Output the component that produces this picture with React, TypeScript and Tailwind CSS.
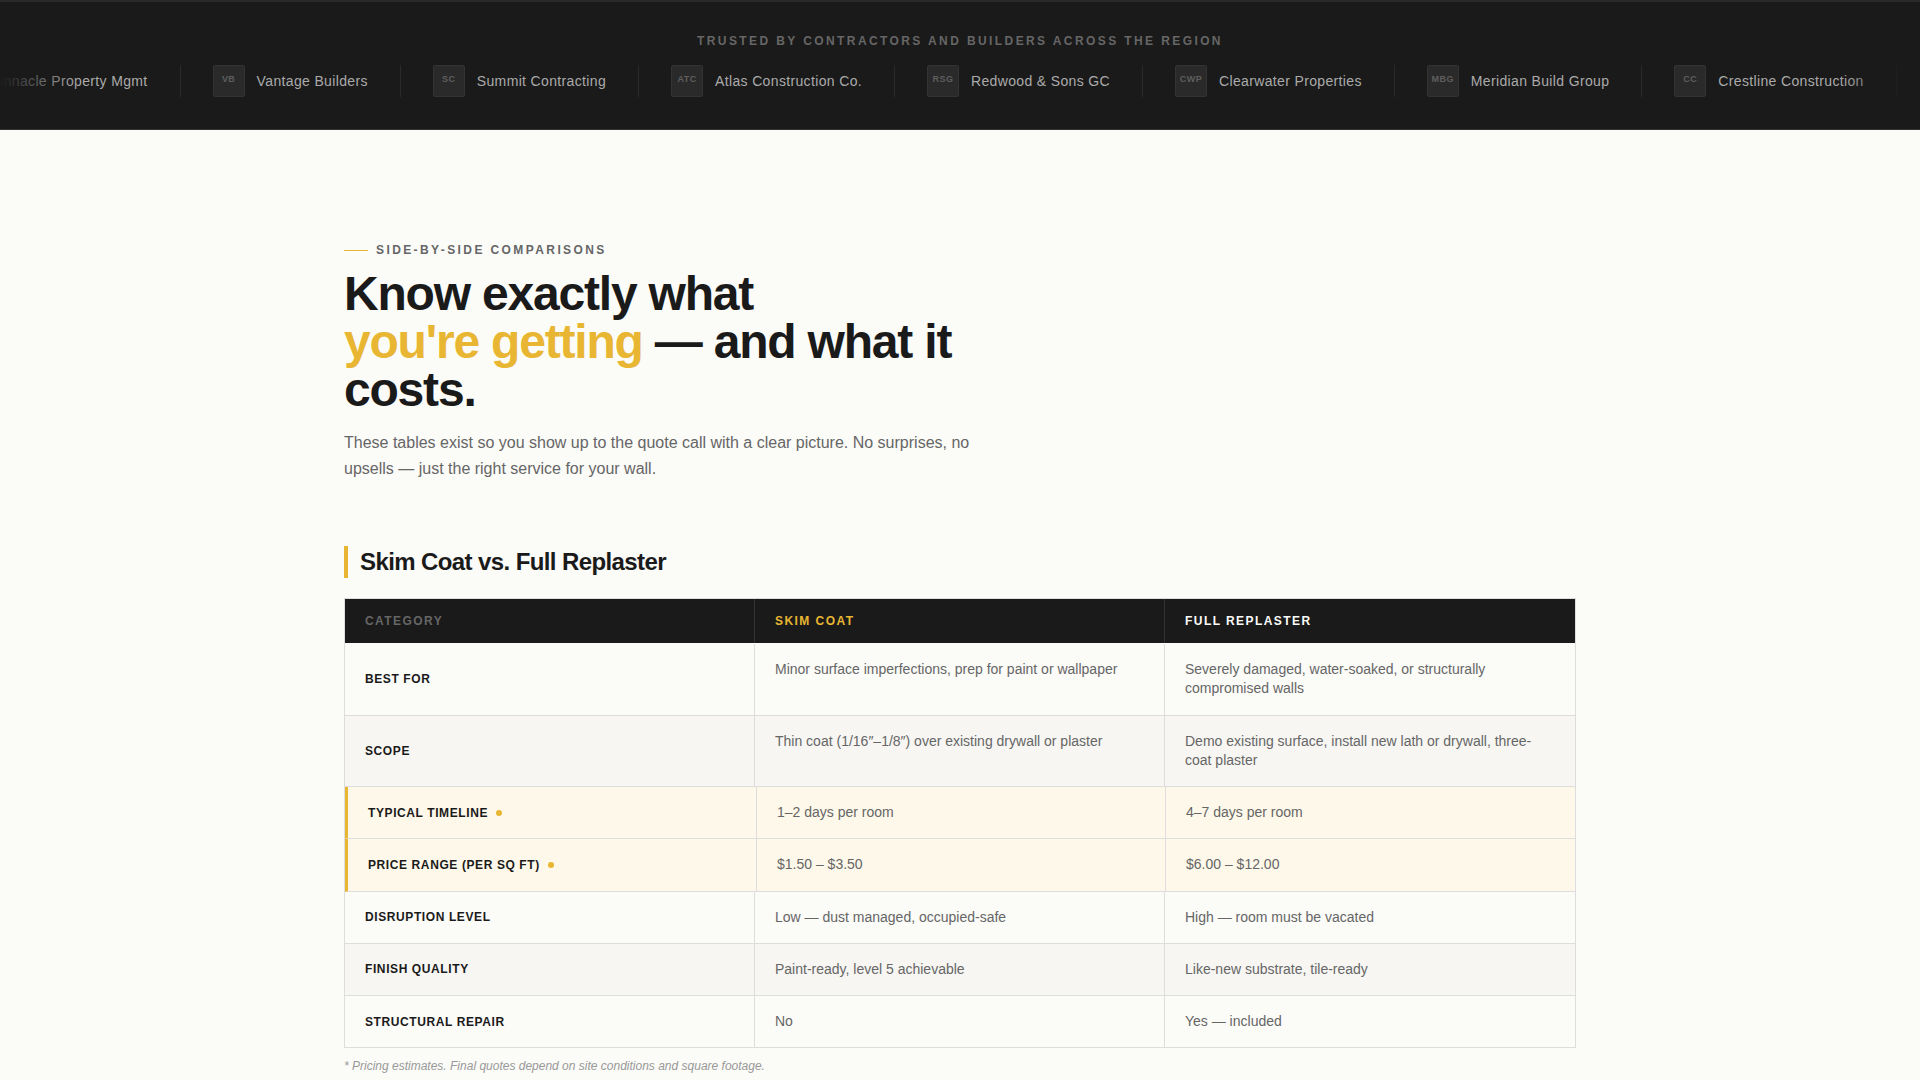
const logos: [string, string][] = [
  ["PP", "Pinnacle Property Mgmt"],
  ["VB", "Vantage Builders"],
  ["SC", "Summit Contracting"],
  ["ATC", "Atlas Construction Co."],
  ["RSG", "Redwood & Sons GC"],
  ["CWP", "Clearwater Properties"],
  ["MBG", "Meridian Build Group"],
  ["CC", "Crestline Construction"],
  ["PP", "Pinnacle Property Mgmt"],
];

type Row = { label: string; a: string; b: string; hl?: boolean; alt?: boolean };
const rows: Row[] = [
  { label: "Best For", a: "Minor surface imperfections, prep for paint or wallpaper", b: "Severely damaged, water-soaked, or structurally compromised walls" },
  { label: "Scope", a: "Thin coat (1/16\u2033\u20131/8\u2033) over existing drywall or plaster", b: "Demo existing surface, install new lath or drywall, three-coat plaster", alt: true },
  { label: "Typical Timeline", a: "1\u20132 days per room", b: "4\u20137 days per room", hl: true },
  { label: "Price Range (per sq ft)", a: "$1.50 \u2013 $3.50", b: "$6.00 \u2013 $12.00", hl: true },
  { label: "Disruption Level", a: "Low \u2014 dust managed, occupied-safe", b: "High \u2014 room must be vacated" },
  { label: "Finish Quality", a: "Paint-ready, level 5 achievable", b: "Like-new substrate, tile-ready", alt: true },
  { label: "Structural Repair", a: "No", b: "Yes \u2014 included" },
];

export default function App() {
  return (
    <div className="min-h-screen bg-[#fbfbf8] font-['Liberation_Sans',Arial,sans-serif] text-[#1a1a1a]">
      <header className="h-[130px] bg-[#1a1a1a] border-t-2 border-b border-t-[#2a2a2a] border-b-[#333] pt-[31px]">
        <p className="text-center text-[12px] leading-[16px] font-bold tracking-[0.2em] uppercase text-[#666]">
          Trusted by contractors and builders across the region
        </p>
        <div className="relative mt-[16px] overflow-hidden">
          <div className="flex w-max ml-[-85.5px]">
            {logos.map(([abbr, name], i) => (
              <div key={i} className="flex items-center gap-3 px-8 border-r border-[#2a2a2a] h-8 shrink-0">
                <div className="w-8 h-8 shrink-0 flex items-center justify-center bg-[#2a2a2a] border border-[#333] rounded-[2px]">
                  <span className="text-[9px] font-bold tracking-[0.05em] text-[#5e5e5e] -translate-y-px">{abbr}</span>
                </div>
                <span className="text-[14px] tracking-[0.025em] text-[#aaa] whitespace-nowrap">{name}</span>
              </div>
            ))}
          </div>
          <div className="absolute inset-y-0 left-0 w-20 bg-gradient-to-r from-[#1a1a1a] to-transparent" />
          <div className="absolute inset-y-0 right-0 w-20 bg-gradient-to-l from-[#1a1a1a] to-transparent" />
        </div>
      </header>

      <main className="max-w-[1280px] mx-auto px-6 pt-[112px]">
        <div className="flex items-center gap-2">
          <span className="w-6 h-px bg-[#e8b632]" />
          <span className="text-[12px] leading-[16px] font-bold tracking-[0.2em] uppercase text-[#666]">Side-by-side comparisons</span>
        </div>
        <h1 className="mt-3 max-w-[640px] text-[48px] leading-[48px] font-bold tracking-[-0.025em] text-[#1a1a1a]">
          Know exactly what<br /><span className="text-[#e8b632]">you're getting</span> — and what it costs.
        </h1>
        <p className="mt-4 max-w-[640px] text-[16px] leading-[26px] text-[#666]">
          These tables exist so you show up to the quote call with a clear picture. No surprises, no upsells — just the right service for your wall.
        </p>

        <h2 className="mt-[64px] border-l-4 border-[#e8b632] pl-3 text-[24px] leading-[32px] font-bold tracking-[-0.025em] text-[#1a1a1a]">
          Skim Coat vs. Full Replaster
        </h2>

        <div className="mt-5 border border-[#ddd]">
          <div className="grid grid-cols-3 bg-[#1a1a1a] border-b border-b-[#fbfbf8] text-[12px] leading-[16px] font-bold tracking-[0.12em] uppercase">
            <div className="py-[14px] px-5 border-r border-[#333] text-[#666]">Category</div>
            <div className="py-[14px] px-5 border-r border-[#333] text-[#e8b632]">Skim Coat</div>
            <div className="py-[14px] px-5 text-[#fafaf8]">Full Replaster</div>
          </div>
          {rows.map((r, i) => {
            const bg = r.hl ? "bg-[#fdf8e9] border-l-[3px] border-l-[#e8b632]" : r.alt ? "bg-[#f7f6f3]" : "bg-[#fbfbf8]";
            const last = i === rows.length - 1;
            return (
              <div key={r.label} className={`grid grid-cols-3 ${last ? "" : "border-b border-b-[#ddd]"} ${bg}`}>
                <div className="px-5 py-4 flex items-center gap-2 border-r border-[#ddd] text-[12px] leading-[16px] font-bold tracking-[0.05em] uppercase text-[#1a1a1a]">
                  {r.label}
                  {r.hl && <span className="w-1.5 h-1.5 rounded-full bg-[#e8b632]" />}
                </div>
                <div className="px-5 py-4 border-r border-[#ddd] text-[14px] leading-[19.25px] text-[#666]">{r.a}</div>
                <div className="px-5 py-4 text-[14px] leading-[19.25px] text-[#666]">{r.b}</div>
              </div>
            );
          })}
        </div>
        <p className="mt-[10px] text-[12px] leading-[16px] italic text-[#999]">* Pricing estimates. Final quotes depend on site conditions and square footage.</p>
      </main>
    </div>
  );
}
